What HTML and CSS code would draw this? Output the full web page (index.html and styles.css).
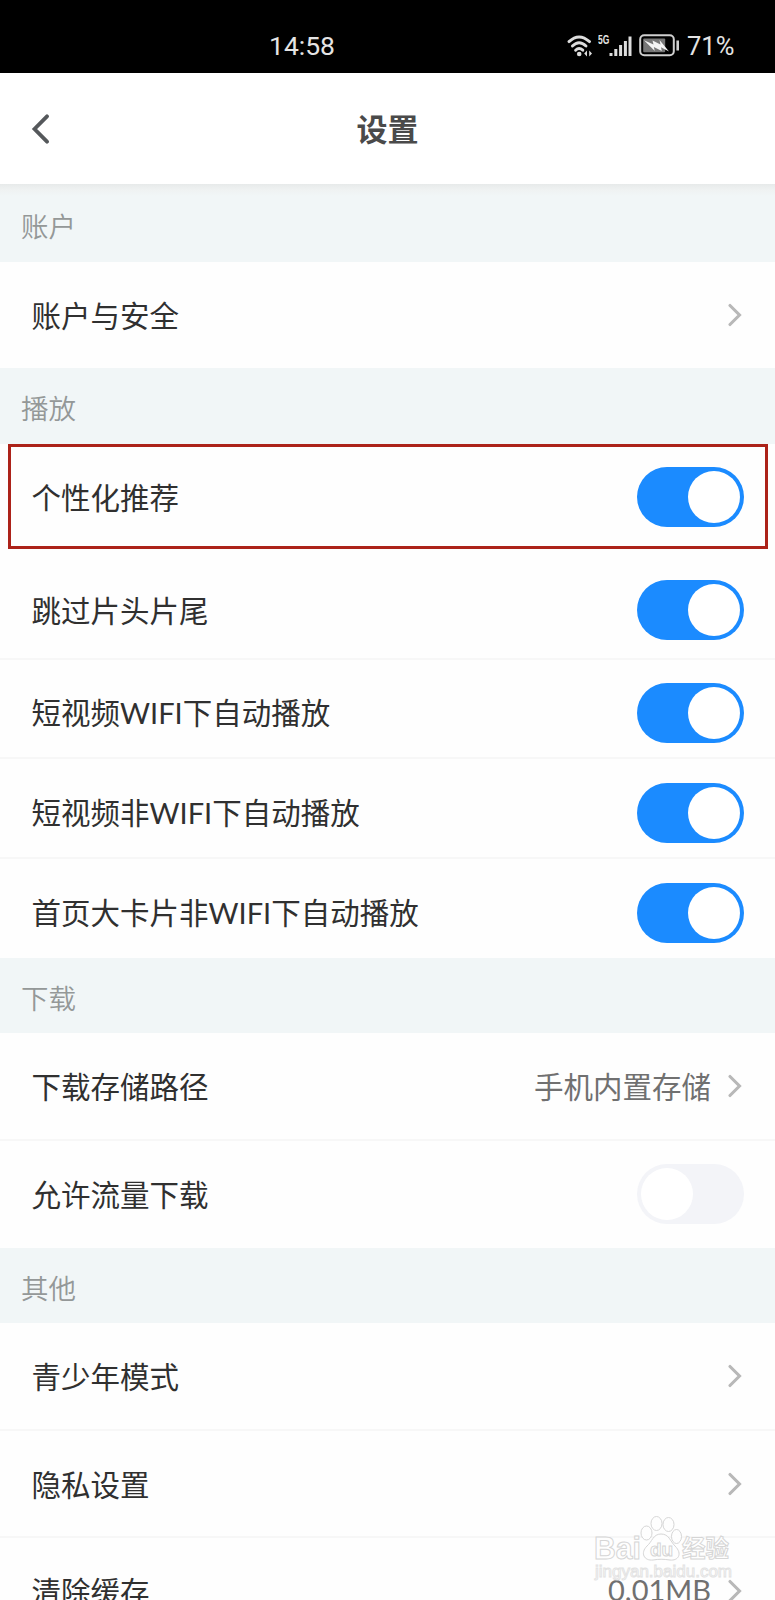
FILE: index.html
```
<!DOCTYPE html>
<html lang="zh-CN">
<head>
  <meta charset="UTF-8">
  <title>设置</title>
  <link rel="stylesheet" href="styles.css">
</head>
<body>

  <svg class="defs" width="0" height="0">
    <symbol id="arrow" viewBox="0 0 14 24">
      <path d="M2 2.5 L11.5 12 L2 21.5" fill="none" stroke="#b8b8b8" stroke-width="3.1" stroke-linecap="round"/>
    </symbol>
  </svg>

  <div class="status-bar">
    <span class="time">14:58</span>
    <svg class="wifi" width="27" height="22" viewBox="0 0 27 22">
      <g fill="none" stroke="#ddd" stroke-width="2.9" stroke-linecap="round">
        <path d="M2 6.6 Q12 -2.8 22.5 6.6"/>
        <path d="M5.4 11 Q12 4.4 19 11"/>
        <path d="M8.6 15.2 Q12 11.8 15.8 15.2"/>
      </g>
      <circle cx="12.2" cy="19" r="2.3" fill="#ddd"/>
      <path d="M17.2 18.5 L20 15.5 V21.5 Z M25 18.5 L22.2 15.5 V21.5 Z" fill="#ddd"/>
    </svg>
    <span class="net">5G</span>
    <svg class="signal" width="23" height="22" viewBox="0 0 23 22">
      <path d="M2 18V21 M6.8 14V21 M11.6 10V21 M16.4 6V21 M21 1.5V21" stroke="#ddd" stroke-width="3"/>
    </svg>
    <svg class="battery" width="41" height="23" viewBox="0 0 41 23">
      <rect x="1.2" y="1.2" width="33.6" height="20" rx="4" fill="none" stroke="#d0d0d0" stroke-width="2"/>
      <rect x="4.2" y="4.4" width="22" height="13.8" rx="1" fill="#777"/>
      <path d="M5 6.2 L14.5 10.5 L13.5 6.5 L21.5 10.5 L20.5 6 L30 17.5 L22 13.2 L22.8 17 L14.8 13 L15.8 17 Z" fill="#f4f4f4"/>
      <path d="M38.7 6.5V16.5" stroke="#d0d0d0" stroke-width="2.6"/>
    </svg>
    <span class="percent">71%</span>
  </div>

  <header>
    <svg class="back" width="20" height="30" viewBox="0 0 20 30">
      <path d="M17 2.3 L4.5 15 L17 27.7" fill="none" stroke="#55585b" stroke-width="3.8" stroke-linecap="round"/>
    </svg>
    <h1>设置</h1>
  </header>

  <h2 class="first">账户</h2>
  <div class="row last">
    <span>账户与安全</span>
    <svg class="arrow"><use href="#arrow"/></svg>
  </div>

  <h2>播放</h2>
  <div class="row marked">
    <span>个性化推荐</span>
    <i class="switch on"></i>
  </div>
  <div class="row skip">
    <span>跳过片头片尾</span>
    <i class="switch on"></i>
  </div>
  <div class="row short">
    <span>短视频<span class="latin">WIFI</span>下自动播放</span>
    <i class="switch on"></i>
  </div>
  <div class="row short">
    <span>短视频非<span class="latin">WIFI</span>下自动播放</span>
    <i class="switch on"></i>
  </div>
  <div class="row short last">
    <span>首页大卡片非<span class="latin">WIFI</span>下自动播放</span>
    <i class="switch on"></i>
  </div>

  <h2>下载</h2>
  <div class="row">
    <span>下载存储路径</span>
    <span class="value">手机内置存储</span>
    <svg class="arrow"><use href="#arrow"/></svg>
  </div>
  <div class="row last">
    <span>允许流量下载</span>
    <i class="switch"></i>
  </div>

  <h2>其他</h2>
  <div class="row">
    <span>青少年模式</span>
    <svg class="arrow"><use href="#arrow"/></svg>
  </div>
  <div class="row">
    <span>隐私设置</span>
    <svg class="arrow"><use href="#arrow"/></svg>
  </div>
  <div class="row">
    <span>清除缓存</span>
    <span class="value latin">0.01MB</span>
    <svg class="arrow"><use href="#arrow"/></svg>
  </div>

  <svg class="watermark" width="150" height="76" viewBox="0 0 150 76">
    <g fill="#fff" stroke="#d2d2d2" stroke-width="1">
      <text class="brand" x="2" y="47" textLength="47" lengthAdjust="spacingAndGlyphs">Bai</text>
      <ellipse cx="54.5" cy="21" rx="5.5" ry="7"/>
      <ellipse cx="64.5" cy="11.5" rx="5.5" ry="7"/>
      <ellipse cx="76.5" cy="12.5" rx="5.5" ry="7"/>
      <ellipse cx="84.5" cy="24.5" rx="5" ry="7"/>
      <path d="M69 22 C77 22 78 29 83 34 C91 42 86 49 78 48 C71 47 67 47 61 48 C52 49 48 41 55 34 C60 30 61 22 69 22 Z"/>
      <text class="du" x="58" y="44">du</text>
      <text class="cn" x="90" y="45" textLength="47" lengthAdjust="spacingAndGlyphs">经验</text>
    </g>
    <text class="url" x="3" y="65" textLength="137" lengthAdjust="spacingAndGlyphs">jingyan.baidu.com</text>
  </svg>

</body>
</html>
```
FILE: styles.css
```
* {
  box-sizing: border-box;
}

body {
  position: relative;
  width: 775px;
  height: 1600px;
  margin: 0;
  overflow: hidden;
  background-color: #fefefe;
  color: #303030;
  font-family: "Noto Sans CJK SC", sans-serif;
}

.defs {
  position: absolute;
}

.status-bar {
  display: flex;
  align-items: center;
  height: 73px;
  padding: 18px 0 0 269px;
  background-color: #000;
  color: #e4e4e4;
  font-family: Roboto, sans-serif;
  font-size: 26.5px;
}

.time {
  width: 298px;
}

.net {
  width: 12px;
  margin: -12px 0 0 4px;
  font-size: 13px;
  line-height: 12px;
  font-weight: bold;
  font-family: "Liberation Sans", sans-serif;
  transform: scaleX(0.65);
  transform-origin: left;
}

.signal {
  margin-left: -1px;
}

.battery {
  margin-left: 7px;
}

.percent {
  margin-left: 7px;
  font-size: 25.5px;
}

header {
  display: flex;
  align-items: center;
  height: 111px;
  padding: 1px 30px 0;
  background-color: #fff;
}

h1 {
  flex: 1;
  margin: -2px 20px 0 0;
  text-align: center;
  color: #4a4a4a;
  font-size: 31px;
  line-height: 40px;
  font-weight: bold;
}

h2 {
  height: 75.5px;
  margin: 0;
  padding: 4px 21px 0;
  background-color: #f1f6f7;
  color: #949898;
  font-size: 27.5px;
  line-height: 71px;
  font-weight: 350;
}

h2.first {
  height: 78px;
  padding-top: 6px;
  background-image: linear-gradient(#e7eaea, #eff2f2 6px, #f1f6f7 12px);
}

.row {
  display: flex;
  align-items: center;
  justify-content: space-between;
  height: 107.5px;
  padding: 0 31px 0 31.5px;
  border-bottom: 2px solid #f7f7f7;
  font-size: 29.5px;
  line-height: 40px;
  white-space: nowrap;
}

.row > span {
  margin-top: -2px;
}

.row.last {
  border-bottom: none;
}

h2.first + .row {
  height: 106.3px;
}

.marked {
  height: 105px;
  margin: 0 7px 0 8px;
  padding: 1px 21px 0 20.5px;
  border: 3px solid #ac2219;
}

.skip {
  height: 111px;
  padding-top: 13px;
}

.short {
  height: 99.4px;
  padding-top: 10px;
}

.short.last {
  padding-top: 9px;
}

h2 + .row + .row.last {
  height: 106.8px;
}

.value {
  margin-left: auto;
  margin-right: 17px;
  color: #707070;
}

.latin {
  font-family: Lato, sans-serif;
  font-size: 29px;
}

.arrow {
  width: 14px;
  height: 24px;
  margin-right: 2px;
}

.switch {
  display: flex;
  width: 107px;
  height: 60px;
  padding: 4px;
  border-radius: 30px;
  background-color: #f3f4f8;
}

.switch::before {
  content: "";
  width: 52px;
  height: 52px;
  border-radius: 50%;
  background-color: #fff;
}

.switch.on {
  justify-content: flex-end;
  background-color: #1b8bff;
}

.watermark {
  position: absolute;
  left: 592px;
  top: 1512px;
  opacity: 0.9;
}

.brand {
  font: bold 31px "Liberation Sans", sans-serif;
}

.du {
  font: bold 19px "Liberation Sans", sans-serif;
}

.cn {
  font: bold 24px "Noto Sans CJK SC", sans-serif;
}

.url {
  fill: #fff;
  stroke: #e0e0e0;
  stroke-width: 0.9;
  font: 16px "Liberation Sans", sans-serif;
}
```
